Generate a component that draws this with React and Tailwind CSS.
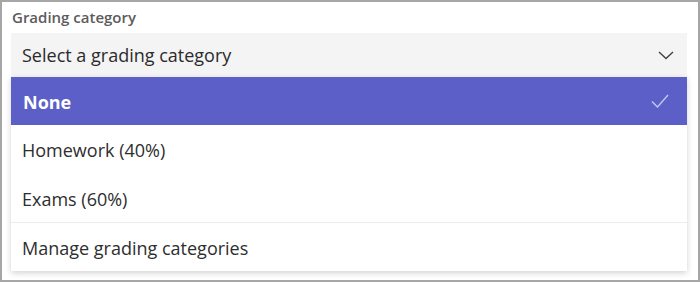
export default function App() {
  const font = { fontFamily: '"Open Sans", "Noto Sans", sans-serif' };
  return (
    <div className="w-[700px] h-[282px] border-2 border-[#a6a6a6] bg-white overflow-hidden" style={font}>
      <div className="pl-[9px] pr-[11px] pt-[5px]">
        <div className="text-[15px] leading-[21px] font-semibold text-[#5c5c5c] pl-[1px]">Grading category</div>
        <div className="mt-[5px] h-[44px] bg-[#f4f4f4] flex items-center justify-between pl-[11px] pr-[13px]">
          <span className="text-[18px] text-[#2b2b2b] mt-[1px]">Select a grading category</span>
          <svg width="16" height="9" viewBox="0 0 16 9" fill="none">
            <path d="M1 1l7 6.5L15 1" stroke="#424242" strokeWidth="1.4" />
          </svg>
        </div>
        <div className="bg-white shadow-[0_2px_6px_rgba(0,0,0,0.18)]">
          <div className="h-[48px] bg-[#5b5fc7] flex items-center justify-between pl-[12px] pr-[18px]">
            <span className="text-[18px] font-bold text-white mt-[3px]">None</span>
            <svg width="18" height="14" viewBox="0 0 18 14" fill="none">
              <path d="M1 7.5l5.5 5.5L17 1" stroke="rgba(255,255,255,0.65)" strokeWidth="1.4" />
            </svg>
          </div>
          <div className="h-[48px] flex items-center pl-[11px] text-[18px] text-[#2e2e2e]">
            <span className="mt-[3px]">Homework (40%)</span>
          </div>
          <div className="h-[49px] flex items-center pl-[11px] text-[18px] text-[#2e2e2e]">
            <span className="mt-[3px]">Exams (60%)</span>
          </div>
          <div className="h-[1px] bg-[#ececec]" />
          <div className="h-[48px] flex items-center pl-[11px] text-[18px] text-[#2e2e2e]">
            <span className="mt-[3px]">Manage grading categories</span>
          </div>
        </div>
      </div>
    </div>
  );
}
